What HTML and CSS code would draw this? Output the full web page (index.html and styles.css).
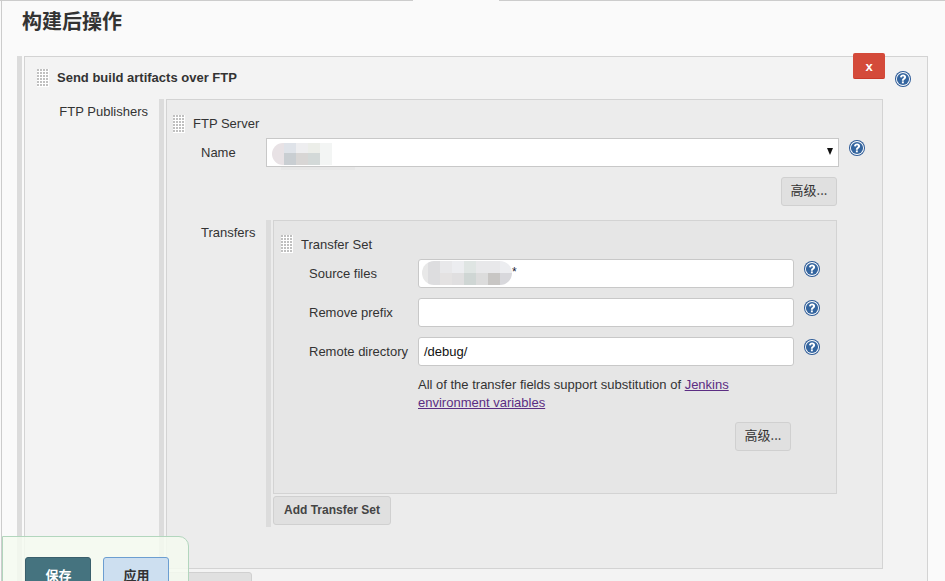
FILE: index.html
```html
<!DOCTYPE html>
<html lang="zh">
<head>
<meta charset="utf-8">
<title>构建后操作</title>
<link rel="stylesheet" href="styles.css">
</head>
<body>
<svg class="sprites" width="0" height="0" aria-hidden="true">
  <symbol id="help" viewBox="0 0 16 16">
    <circle cx="8" cy="8" r="8" fill="#2c5a97"/>
    <circle cx="8" cy="8" r="7" fill="#fff"/>
    <circle cx="8" cy="8" r="6.100" fill="#34659f"/>
    <path d="M5 6.300C5 4.500 6.400 3.400 8.100 3.400s3 1 3 2.700c0 1.200-.7 1.800-1.500 2.400-.6.4-.8.7-.8 1.300H6.900c0-1.100.3-1.700 1-2.200.6-.5 1-.8 1-1.400 0-.6-.4-1-.9-1s-.9.5-.9 1.200Z" fill="#fff"/>
    <rect x="6.900" y="10.400" width="1.900" height="1.900" fill="#fff"/>
  </symbol>
</svg>
<div class="topline"><span class="topline-seg left"></span><span class="topline-seg right"></span></div>
<main class="page">
  <h1 class="section-title">构建后操作</h1>
  <section class="block">
    <div class="bar"></div>
    <div class="panel outer">
      <button class="btn-delete" type="button">X</button>
      <div class="outer-head">
        <span class="handle"></span>
        <b class="outer-title">Send build artifacts over FTP</b>
        <svg class="help help-outer"><use href="#help"/></svg>
      </div>
      <div class="publishers">
        <div class="publishers-label">FTP Publishers</div>
        <div class="block server-block">
          <div class="bar"></div>
          <div class="server-col">
            <div class="panel server">
              <div class="sub-head"><span class="handle"></span><span>FTP Server</span></div>
              <div class="name-row">
                <label class="server-label">Name</label>
                <div class="select"><span class="caret"></span>
                  <div class="trail"></div>
                  <div class="mosaic mosaic-name">
                    <i class="n1"></i><i class="n2"></i><i class="n3"></i><i class="n4"></i><i class="n5"></i>
                    <i class="n1"></i><i class="n6"></i><i class="n7"></i><i class="n8"></i><i class="n5"></i>
                  </div>
                </div>
                <svg class="help"><use href="#help"/></svg>
              </div>
              <div class="adv-row server-adv"><button class="btn" type="button">高级...</button></div>
              <div class="transfers-row">
                <label class="server-label">Transfers</label>
                <div class="transfers-col">
                  <div class="block">
                    <div class="bar"></div>
                    <div class="transfer-col">
                      <div class="panel transfer">
                        <div class="sub-head transfer-head"><span class="handle"></span><span class="transfer-title">Transfer Set</span></div>
                        <div class="field">
                          <label>Source files</label>
                          <div class="input"><span class="star">*</span>
                            <div class="mosaic mosaic-source">
                              <i class="s1"></i><i class="s2"></i><i class="s3"></i><i class="s4"></i><i class="s5"></i><i class="s3"></i><i class="s3"></i><i class="s4"></i>
                              <i class="s1"></i><i class="s2"></i><i class="s6"></i><i class="s7"></i><i class="s8"></i><i class="s9"></i><i class="s10"></i><i class="s11"></i>
                            </div>
                          </div>
                          <svg class="help"><use href="#help"/></svg>
                        </div>
                        <div class="field">
                          <label>Remove prefix</label>
                          <div class="input"></div>
                          <svg class="help"><use href="#help"/></svg>
                        </div>
                        <div class="field">
                          <label>Remote directory</label>
                          <div class="input">/debug/</div>
                          <svg class="help"><use href="#help"/></svg>
                        </div>
                        <p class="note">All of the transfer fields support substitution of <a href="#">Jenkins environment variables</a></p>
                        <div class="adv-row transfer-adv"><button class="btn" type="button">高级...</button></div>
                      </div>
                      <button class="btn btn-bold add-transfer" type="button">Add Transfer Set</button>
                    </div>
                  </div>
                </div>
              </div>
            </div>
            <button class="btn btn-bold add-server" type="button">Add Server</button>
          </div>
        </div>
      </div>
    </div>
  </section>
</main>
<div class="savebar">
  <button class="btn-save" type="button">保存</button>
  <button class="btn-apply" type="button">应用</button>
</div>
</body>
</html>
```
FILE: styles.css
```css
* { box-sizing: border-box; }
html, body { margin: 0; height: 581px; overflow: hidden; }
body {
  background: #fafafa;
  color: #333;
  font: 13px/18px "Liberation Sans", "Noto Sans CJK SC", sans-serif;
  position: relative;
}
.sprites { position: absolute; }
.topline { display: flex; justify-content: space-between; height: 1px; }
.topline-seg { background: #ccc; }
.topline-seg.left { width: 413px; }
.topline-seg.right { width: 446px; }
.page { margin-left: 1px; border-left: 1px solid #ccc; padding: 0 17px 0 15px; height: 580px; }
.section-title {
  margin: 0; height: 55px; padding: 8px 0 0 5px;
  font: bold 20px/24px "Noto Sans CJK SC", sans-serif; color: #333;
}
.block { display: flex; gap: 2px; align-items: stretch; }
.bar { width: 5px; flex: none; background: #dcdcdc; }
.panel { border: 1px solid #d3d3d3; }
.outer { position: relative; flex: 1; background: #f3f3f3; padding-bottom: 40px; }
.btn-delete {
  position: absolute; top: -4px; right: 42px; width: 32px; height: 26px;
  background: #d44a3a; border: 0; border-bottom: 1px solid #c9392a; border-radius: 2px;
  color: #fff; font: bold 13px/26px "Liberation Sans", sans-serif; text-transform: lowercase;
}
.outer-head { display: flex; align-items: center; padding: 12px 16px 12px 12px; height: 42px; }
.outer-title { flex: 1; margin-left: 8px; }
.help-outer { margin-top: 2px; }
.handle {
  width: 12px; height: 18px; flex: none;
  background: #fff radial-gradient(circle at 1px 1px, #c0c0c0 0 1px, #fff 1px) 0 0 / 3px 3px;
}
.help { width: 16px; height: 16px; flex: none; display: block; }
.publishers { display: flex; }
.publishers-label { width: 134px; flex: none; padding: 4px 11px 0 0; text-align: right; }
.server-block { width: 724px; flex: none; }
.server-col { flex: 1; min-width: 0; }
.server { background: #ececec; padding: 15px 0 41px 6px; height: 470px; }
.sub-head { display: flex; align-items: center; gap: 8px; height: 18px; }
.server-label { width: 93px; flex: none; padding-left: 28px; }
.name-row { display: flex; align-items: flex-start; margin-top: 5px; }
.name-row .server-label { padding-top: 6px; }
.select {
  position: relative; width: 573px; height: 29px; flex: none;
  background: #fff; border: 1px solid #c8c8c8;
}
.caret {
  position: absolute; right: 5px; top: 9px;
  border-style: solid; border-width: 7px 3.500px 0; border-color: #111 transparent transparent;
}
.trail { position: absolute; left: 14px; bottom: -4px; width: 74px; height: 3px; background: #e7e7e7; }
.name-row .help { margin: 2px 0 0 10px; }
.mosaic { position: absolute; display: grid; overflow: hidden; }
.mosaic i { display: block; }
.mosaic-name { left: 5px; top: 4px; grid-template-columns: repeat(5, 12px); grid-template-rows: 10px 12px; border-radius: 12px 0 0 12px; }
.mosaic-source { left: 3px; top: 1px; grid-template-columns: 6px repeat(7, 12px); grid-template-rows: repeat(2, 12px); border-radius: 12px; }
.n1 { background: #e8e2e5; }
.n2 { background: #dfe3e9; }
.n3 { background: #eeeef0; }
.n4 { background: #eceee9; }
.n5 { background: #f3f5f4; }
.n6 { background: #c9ced2; }
.n7 { background: #d8d6d5; }
.n8 { background: #d3d9d8; }
.s1 { background: #e8e8e8; }
.s2 { background: #dddddf; }
.s3 { background: #e8e8ea; }
.s4 { background: #ecedf0; }
.s5 { background: #dfe5e3; }
.s6 { background: #e4e2e2; }
.s7 { background: #e0dfe0; }
.s8 { background: #cfd6d4; }
.s9 { background: #dcdcdc; }
.s10 { background: #c8c6c4; }
.s11 { background: #d8d8dc; }
.adv-row { display: flex; justify-content: flex-end; }
.server-adv { margin: 10px 45px 0 0; }
.btn {
  background: #e0e0e0; border: 1px solid #d0d0d0; border-radius: 3px;
  color: #333; height: 29px; width: 56px; padding: 0 0 4px;
  font: 13px/23px "Noto Sans CJK SC", "Liberation Sans", sans-serif;
}
.btn-bold { width: auto; padding: 0 10px 0 10px; font: bold 12px/27px "Liberation Sans", sans-serif; color: #444; letter-spacing: 0; }
.transfers-row { display: flex; margin-top: 14px; }
.transfers-row .server-label { padding-top: 4px; }
.transfers-col { width: 571px; flex: none; }
.transfer-col { flex: 1; min-width: 0; padding-bottom: 2px; }
.transfer { background: #e6e6e6; height: 274px; padding: 14px 0 0 7px; }
.transfer-head { margin-bottom: 6px; }
.transfer-title { padding-top: 2px; }
.field { display: flex; align-items: center; height: 29px; margin-bottom: 10px; }
.field label { width: 137px; flex: none; padding-left: 28px; white-space: nowrap; }
.input {
  position: relative; width: 376px; height: 29px; flex: none;
  background: #fff; border: 1px solid #c8c8c8; border-radius: 3px;
  padding: 5px 5px 4px; color: #111;
}
.star { position: absolute; left: 93px; top: 3px; font-size: 12px; color: #223; }
.field .help { margin: 0 0 10px 10px; }
.note { margin: 0 0 0 137px; width: 340px; }
.note a { color: #5b2d83; }
.transfer-adv { margin: 10px 45px 0 0; }
.add-transfer { margin-top: 2px; }
.add-server { margin: 3px 0 0 0; }
.savebar {
  position: absolute; left: 2px; top: 536px; width: 187px; height: 60px;
  display: flex; gap: 12px; padding: 20px 0 0 22px;
  background: rgba(245, 250, 240, .85); border: 1px solid #b2d6bd; border-radius: 0 10px 0 0;
}
.btn-save, .btn-apply {
  width: 66px; height: 36px; border-radius: 3px;
  font: bold 13px/34px "Noto Sans CJK SC", sans-serif; padding: 0 0 0 1px;
}
.btn-save { background: #45737f; border: 1px solid #3a5f6c; color: #fff; }
.btn-apply { background: #cddff0; border: 1px solid #6c9ed1; color: #333; }
```
